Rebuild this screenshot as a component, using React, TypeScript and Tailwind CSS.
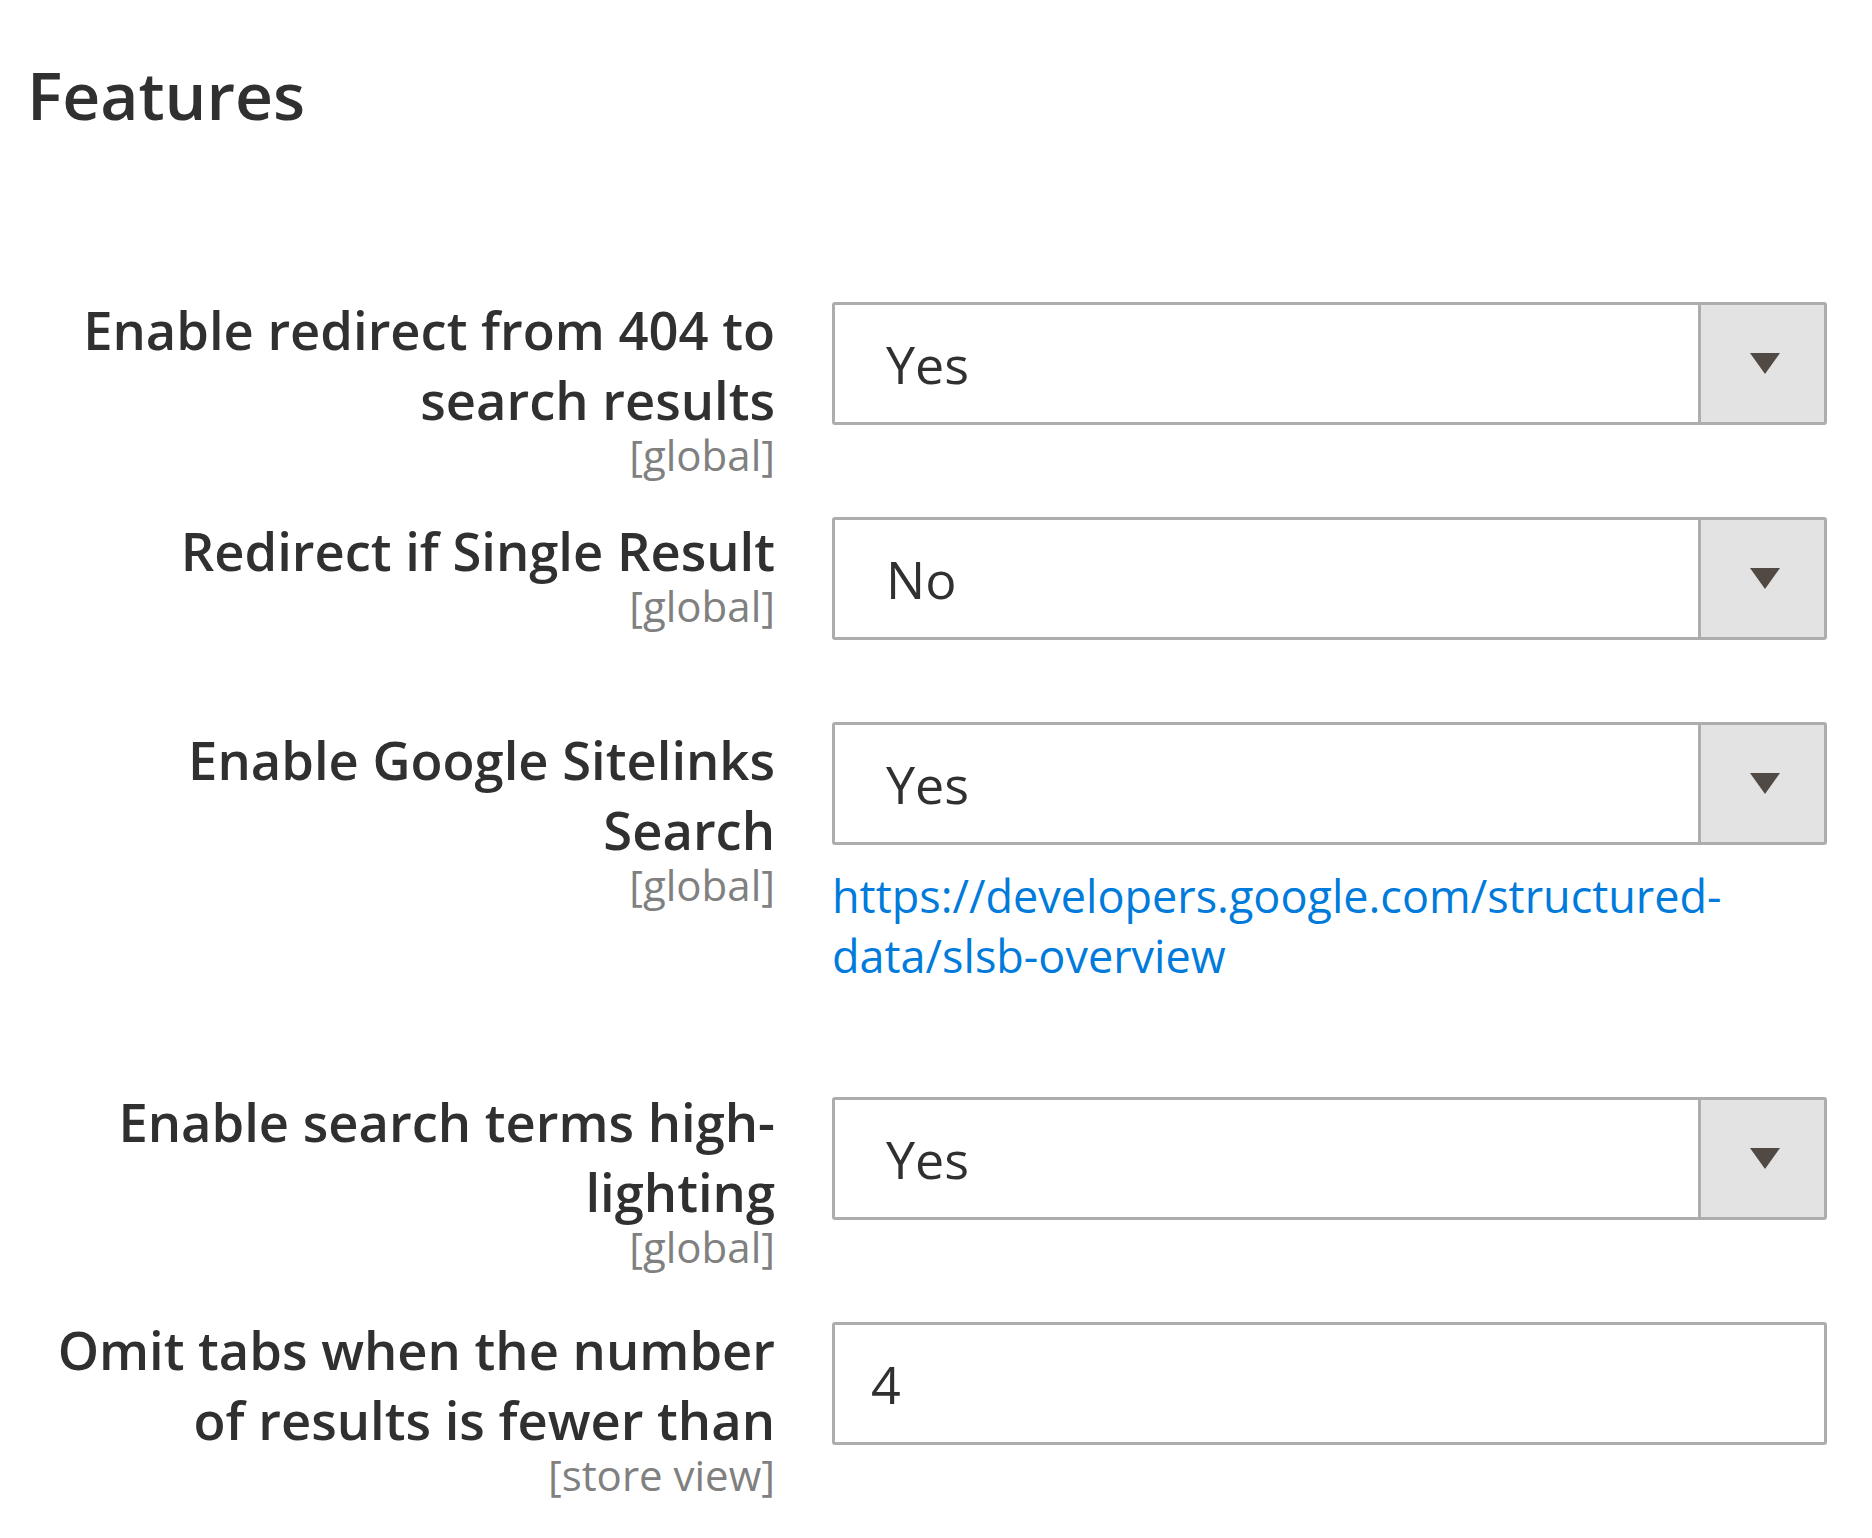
const rows = [
  {
    label: ["Enable redirect from 404 to", "search results"],
    scope: "[global]",
    value: "Yes",
    kind: "select",
    mt: "mt-[162px]",
    labelPt: "pt-0",
    ctrlPt: "pt-[7px]",
  },
  {
    label: ["Redirect if Single Result"],
    scope: "[global]",
    value: "No",
    kind: "select",
    mt: "mt-[41px]",
    labelPt: "pt-0",
    ctrlPt: "pt-[1px]",
  },
  {
    label: ["Enable Google Sitelinks", "Search"],
    scope: "[global]",
    value: "Yes",
    kind: "select",
    mt: "mt-[82px]",
    labelPt: "pt-[3px]",
    ctrlPt: "pt-0",
    link: ["https://developers.google.com/structured-", "data/slsb-overview"],
  },
  {
    label: ["Enable search terms high-", "lighting"],
    scope: "[global]",
    value: "Yes",
    kind: "select",
    mt: "mt-[101px]",
    labelPt: "pt-0",
    ctrlPt: "pt-[10px]",
  },
  {
    label: ["Omit tabs when the number", "of results is fewer than"],
    scope: "[store view]",
    value: "4",
    kind: "input",
    mt: "mt-[45px]",
    labelPt: "pt-[3px]",
    ctrlPt: "pt-[10px]",
  },
];

const Select = ({ value }: { value: string }) => (
  <div className="flex h-[123px] w-full rounded-[3px] border-[3px] border-[#adadad] bg-white">
    <div className="flex flex-1 items-center pl-[51px] text-[52px] text-[#303030]">
      {value}
    </div>
    <div className="flex w-[126px] items-center justify-center border-l-[3px] border-[#adadad] bg-[#e3e3e3]">
      <svg width="30" height="21" viewBox="0 0 30 21" className="ml-[4px]">
        <path d="M0 0 H30 L15 21 Z" fill="#514943" />
      </svg>
    </div>
  </div>
);

const Input = ({ value }: { value: string }) => (
  <div className="flex h-[123px] w-full items-center rounded-[3px] border-[3px] border-[#adadad] bg-white pl-[36px] text-[52px] text-[#303030]">
    {value}
  </div>
);

export default function App() {
  return (
    <div className="min-h-[1538px] w-[1872px] bg-white font-['Open_Sans',sans-serif]">
      <div className="flex flex-col pt-[56px]">
        <h2 className="pl-[27px] text-[66px] font-semibold leading-[77px] text-[#303030]">
          Features
        </h2>

        {rows.map((row) => (
          <div
            key={row.label.join(" ")}
            className={`grid grid-cols-[775px_995px] gap-x-[57px] items-start ${row.mt}`}
          >
            <div className={`flex flex-col items-end text-right ${row.labelPt}`}>
              {row.label.map((line) => (
                <span
                  key={line}
                  className="whitespace-nowrap text-[52.5px] font-semibold leading-[70px] text-[#303030]"
                >
                  {line}
                </span>
              ))}
              <span className="text-[42px] leading-[40px] text-[#808080]">
                {row.scope}
              </span>
            </div>

            <div className={`flex flex-col ${row.ctrlPt}`}>
              {row.kind === "select" ? (
                <Select value={row.value} />
              ) : (
                <Input value={row.value} />
              )}
              {row.link && (
                <a
                  href="#"
                  className="mt-[21px] flex flex-col text-[45px] leading-[60px] text-[#007bdb]"
                >
                  <span>{row.link[0]}</span>
                  <span>{row.link[1]}</span>
                </a>
              )}
            </div>
          </div>
        ))}
      </div>
    </div>
  );
}
